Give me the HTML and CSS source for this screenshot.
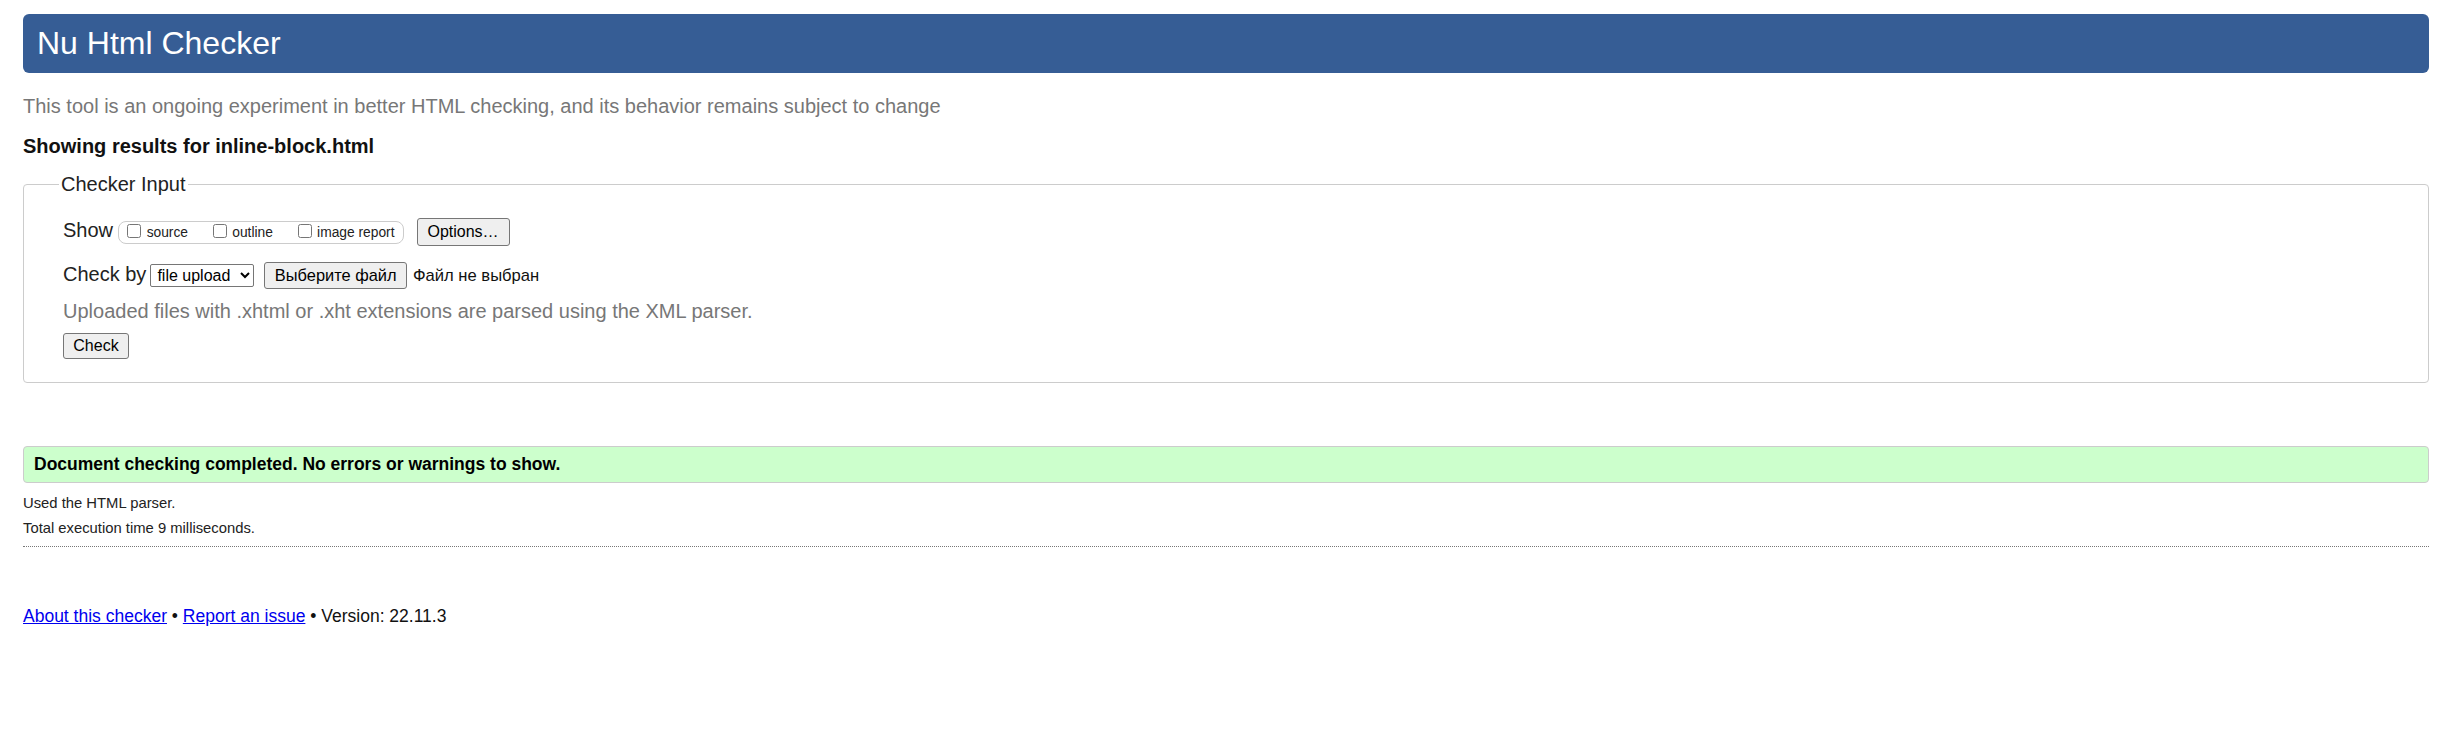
FILE: index.html
```html
<!DOCTYPE html>
<html lang="en">
<head>
<meta charset="utf-8">
<title>Nu Html Checker</title>
<link rel="stylesheet" href="styles.css">
</head>
<body>
<h1 class="title">Nu Html Checker</h1>
<p class="subtitle">This tool is an ongoing experiment in better HTML checking, and its behavior remains subject to change</p>
<p class="showing">Showing results for inline-block.html</p>
<fieldset class="checker">
  <legend class="legend">Checker Input</legend>
  <div class="row row-show">
    <span class="row-label show-label">Show</span>
    <span class="options-group">
      <label class="opt"><input type="checkbox" class="cb"><span>source</span></label>
      <label class="opt"><input type="checkbox" class="cb"><span>outline</span></label>
      <label class="opt opt-last"><input type="checkbox" class="cb"><span>image report</span></label>
    </span>
    <button class="btn btn-options" type="button">Options…</button>
  </div>
  <div class="row row-check">
    <span class="row-label checkby-label">Check by</span>
    <select class="sel"><option>file upload</option></select>
    <button class="btn btn-file" type="button">Выберите файл</button>
    <span class="file-status">Файл не выбран</span>
  </div>
  <p class="hint">Uploaded files with .xhtml or .xht extensions are parsed using the XML parser.</p>
  <div class="row row-submit">
    <button class="btn btn-check" type="button">Check</button>
  </div>
</fieldset>
<div class="success">Document checking completed. No errors or warnings to show.</div>
<p class="details">Used the HTML parser.</p>
<p class="details">Total execution time 9 milliseconds.</p>
<hr class="sep">
<p class="footer"><a href="#">About this checker</a> • <a href="#">Report an issue</a> • Version: 22.11.3</p>
</body>
</html>
```
FILE: styles.css
```css
html, body {
  background: #fff;
}
body {
  margin: 0;
  padding: 14px 28px 0 23px;
  font-family: "Liberation Sans", Arial, sans-serif;
  color: #222;
}
.title {
  margin: 0;
  height: 59px;
  line-height: 59px;
  padding-left: 14px;
  font-size: 32px;
  font-weight: normal;
  color: #fff;
  background: #365d95;
  border-radius: 6px;
}
.subtitle {
  margin: 21px 0 0;
  font-size: 20px;
  line-height: 24px;
  color: #777;
}
.showing {
  margin: 15.5px 0 0;
  font-size: 20px;
  line-height: 24px;
  font-weight: bold;
  color: #111;
}
.checker {
  margin: 14.5px 0 0;
  padding: 22px 0 23px 39px;
  border: 1px solid #ccc;
  border-radius: 4px;
  min-width: 0;
}
.legend {
  margin-left: -4px;
  padding: 0 2px;
  font-size: 20px;
  line-height: 24px;
  color: #222;
}
.row {
  display: flex;
  align-items: center;
}
.row-show {
  height: 28px;
}
.row-check {
  height: 27px;
  margin-top: 16px;
}
.row-submit {
  margin-top: 10px;
}
.row-label {
  font-size: 20px;
  line-height: 20px;
}
.show-label {
  margin-bottom: 4px;
}
.checkby-label {
  margin-bottom: 3px;
}
.options-group {
  display: inline-flex;
  align-items: center;
  box-sizing: border-box;
  height: 23px;
  margin-left: 5px;
  padding: 0 8px 0 8px;
  border: 1px solid #ccc;
  border-radius: 8px;
  font-size: 13.8px;
  line-height: 15px;
}
.opt {
  display: flex;
  align-items: center;
  margin-right: 24.6px;
}
.opt-last {
  margin-right: 0;
}
.cb {
  width: 14px;
  height: 14px;
  margin: 0 5.6px 3px 0;
}
.btn {
  box-sizing: border-box;
  font-family: "Liberation Sans", Arial, sans-serif;
  font-size: 16px;
  color: #000;
  background: #efefef;
  border: 1px solid #767676;
  border-radius: 3px;
  padding: 0;
}
.btn-options {
  width: 93px;
  height: 27.4px;
  margin-left: 13px;
}
.sel {
  box-sizing: border-box;
  width: 104px;
  height: 22.4px;
  margin-left: 4px;
  padding: 0 0 0 2px;
  font-family: "Liberation Sans", Arial, sans-serif;
  font-size: 16px;
  color: #000;
  background: #fff;
  border: 1px solid #767676;
  border-radius: 2px;
}
.btn-file {
  width: 143.4px;
  height: 27px;
  margin-left: 9.6px;
  font-size: 16.4px;
}
.file-status {
  margin-left: 5.6px;
  font-size: 16.6px;
  line-height: 20px;
  color: #111;
}
.hint {
  margin: 10.4px 0 0;
  font-size: 20px;
  line-height: 24px;
  color: #777;
}
.btn-check {
  width: 66px;
  height: 26px;
}
.success {
  margin-top: 63px;
  padding: 7px 10px;
  font-size: 17.5px;
  line-height: 21px;
  font-weight: bold;
  color: #000;
  background: #ccffcc;
  border: 1px solid #ccc;
  border-radius: 4px;
}
.details {
  margin: 0;
  font-size: 14.8px;
  line-height: 25.6px;
  color: #222;
}
.success + .details {
  margin-top: 7.5px;
}
.sep {
  margin: 4px 0 0;
  height: 0;
  border: 0;
  border-top: 1px dotted #777;
}
.footer {
  margin: 57.3px 0 0;
  font-size: 17.5px;
  line-height: 24px;
  color: #111;
}
.footer a {
  color: #0000ee;
}
```
